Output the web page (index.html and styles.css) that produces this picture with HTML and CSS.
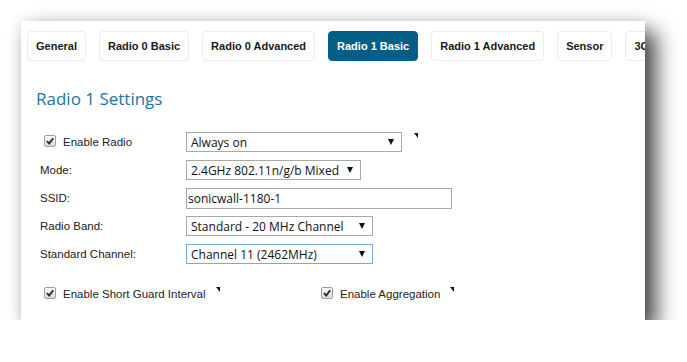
FILE: index.html
```html
<!DOCTYPE html>
<html lang="en">
<head>
  <meta charset="UTF-8">
  <title>Radio 1 Settings</title>
  <link rel="stylesheet" href="styles.css">
</head>
<body>
  <div class="panel">
    <div class="tabs">
      <span class="tab">General</span>
      <span class="tab">Radio 0 Basic</span>
      <span class="tab">Radio 0 Advanced</span>
      <span class="tab active">Radio 1 Basic</span>
      <span class="tab">Radio 1 Advanced</span>
      <span class="tab">Sensor</span>
      <span class="tab">3G</span>
    </div>

    <h2>Radio 1 Settings</h2>

    <div class="form">
      <label class="label check-label">
        <span class="box"><svg viewBox="0 0 12 12" width="12" height="12"><path d="M3 6.2 L5.2 8.6 L9.2 3.2" stroke="#2a2a2a" stroke-width="1.9" fill="none"/></svg></span>
        Enable Radio
      </label>
      <div class="field">
        <div class="select w216"><select><option>Always on</option></select></div>
        <span class="mark"></span>
      </div>

      <label class="label">Mode:</label>
      <div class="field">
        <div class="select w175"><select><option>2.4GHz 802.11n/g/b Mixed</option></select></div>
      </div>

      <label class="label">SSID:</label>
      <div class="field">
        <input class="text w266" type="text" value="sonicwall-1180-1">
      </div>

      <label class="label">Radio Band:</label>
      <div class="field">
        <div class="select w187"><select><option>Standard - 20 MHz Channel</option></select></div>
      </div>

      <label class="label">Standard Channel:</label>
      <div class="field">
        <div class="select w187 focus"><select><option>Channel 11 (2462MHz)</option></select></div>
      </div>
    </div>

    <div class="options">
      <label class="check-label first">
        <span class="box"><svg viewBox="0 0 12 12" width="12" height="12"><path d="M3 6.2 L5.2 8.6 L9.2 3.2" stroke="#2a2a2a" stroke-width="1.9" fill="none"/></svg></span>
        Enable Short Guard Interval<span class="mark"></span>
      </label>
      <label class="check-label">
        <span class="box"><svg viewBox="0 0 12 12" width="12" height="12"><path d="M3 6.2 L5.2 8.6 L9.2 3.2" stroke="#2a2a2a" stroke-width="1.9" fill="none"/></svg></span>
        Enable Aggregation<span class="mark"></span>
      </label>
    </div>
  </div>
</body>
</html>
```
FILE: styles.css
```css
body {
  margin: 0;
  background: #fff;
  font-family: "Liberation Sans", Arial, sans-serif;
  color: #222;
}

.panel {
  margin: 21px 0 0 21px;
  width: 624px;
  height: 299px;
  background: #fff;
  overflow: hidden;
  box-shadow: 11px 11px 20px rgba(0, 0, 0, 0.72), 0 0 14px rgba(0, 0, 0, 0.1);
}

.tabs {
  display: flex;
  gap: 13px;
  padding: 10px 0 0 6px;
  white-space: nowrap;
}

.tab {
  flex-shrink: 0;
  height: 28px;
  line-height: 28px;
  padding: 0 8px;
  border: 1px solid #ebebeb;
  border-radius: 4px;
  font-family: "Liberation Sans", Arial, sans-serif;
  font-weight: bold;
  font-size: 11px;
  color: #1a1a1a;
}

.tab.active {
  background: #035e86;
  border-color: #035e86;
  color: #fff;
}

h2 {
  margin: 26px 0 0 15px;
  font-family: "Open Sans", sans-serif;
  font-weight: normal;
  font-size: 17px;
  line-height: 24px;
  color: #2471a5;
}

.form {
  display: grid;
  grid-template-columns: 146px auto;
  grid-auto-rows: 20px;
  row-gap: 8px;
  margin-top: 21px;
  padding-left: 19px;
}

.label {
  display: flex;
  align-items: center;
  font-size: 11.5px;
}

.check-label {
  display: flex;
  align-items: center;
  gap: 7px;
  padding-left: 4px;
  font-size: 11.5px;
}

.box {
  display: block;
  width: 12px;
  height: 12px;
  box-sizing: border-box;
  border: 1px solid #a0a0a0;
  border-radius: 2px;
  background: linear-gradient(#f6f6f6, #dadada);
  position: relative;
  margin-top: -2px;
}

.box svg {
  position: absolute;
  left: -1px;
  top: -1px;
}

.field {
  display: flex;
  align-items: center;
}

.select {
  position: relative;
  height: 20px;
  box-sizing: border-box;
  border: 1px solid #a9a9a9;
  background: #fff;
}

.select.focus {
  border-color: #7fa6d6;
}

.select select {
  appearance: none;
  -webkit-appearance: none;
  border: none;
  outline: none;
  background: transparent;
  width: 100%;
  height: 18px;
  padding: 0 0 0 4px;
  font-family: "Open Sans", sans-serif;
  font-size: 12px;
  color: #111;
}

.select::after {
  content: "";
  position: absolute;
  right: 7px;
  top: 6px;
  border-top: 6px solid #111;
  border-left: 3.5px solid transparent;
  border-right: 3.5px solid transparent;
}

.text {
  height: 21px;
  box-sizing: border-box;
  border: 1px solid #a9a9a9;
  padding: 0 1px;
  font-family: "Open Sans", sans-serif;
  font-size: 12px;
  color: #111;
  outline: none;
}

.w216 { width: 216px; }
.w175 { width: 175px; }
.w187 { width: 187px; }
.w266 { width: 266px; }

.mark {
  display: inline-block;
  align-self: flex-start;
  width: 0;
  height: 0;
  border-top: 5px solid #111;
  border-left: 4px solid transparent;
  margin-left: 12px;
  margin-top: 1px;
}

.options {
  display: flex;
  margin-top: 20px;
  padding-left: 19px;
  height: 20px;
}

.options .check-label {
  align-items: center;
}

.options .first {
  width: 273px;
}

.options .mark {
  margin-left: 3px;
  margin-top: 3px;
}
```
